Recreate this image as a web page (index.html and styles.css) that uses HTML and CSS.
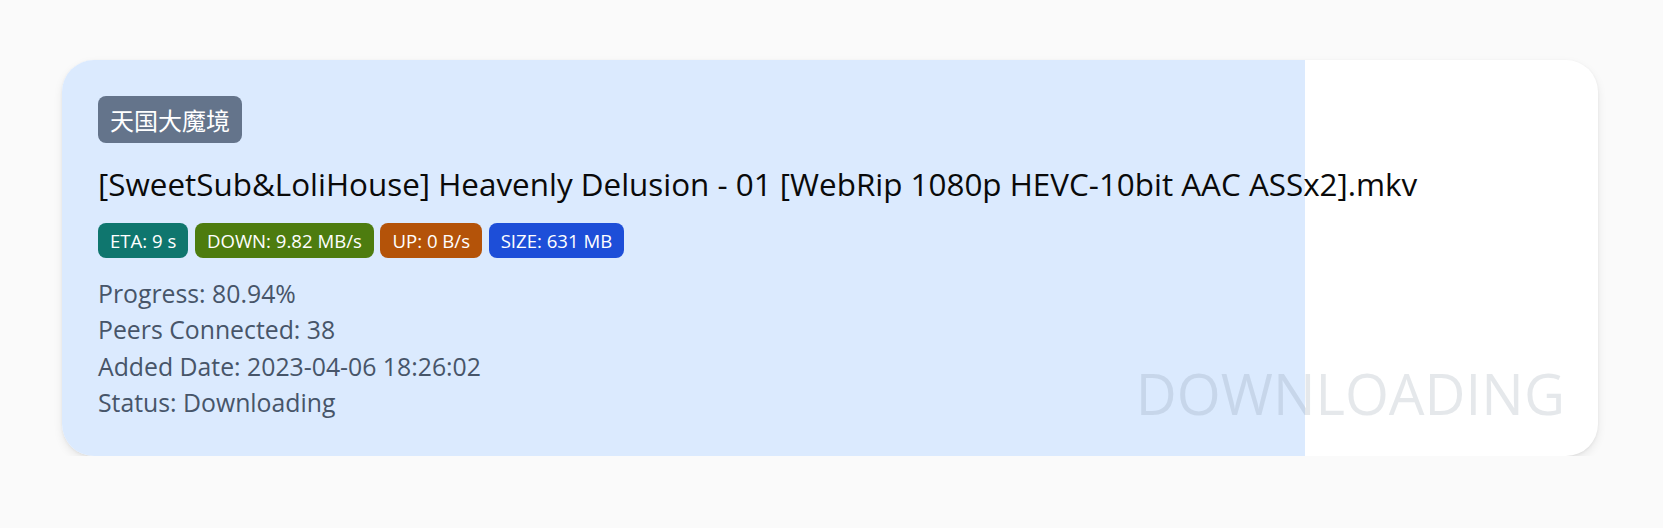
FILE: index.html
```html
<!DOCTYPE html>
<html lang="en">
<head>
<meta charset="utf-8">
<title>Torrent</title>
<link rel="stylesheet" href="styles.css">
</head>
<body>
<main class="page">
  <article class="card">
    <div class="fill" style="width: 80.94%"></div>
    <span class="watermark">DOWNLOADING</span>
    <div class="content">
      <span class="tag">天国大魔境</span>
      <h2 class="title">[SweetSub&amp;LoliHouse] Heavenly Delusion - 01 [WebRip 1080p HEVC-10bit AAC ASSx2].mkv</h2>
      <div class="badges">
        <span class="badge teal">ETA: 9 s</span>
        <span class="badge lime">DOWN: 9.82 MB/s</span>
        <span class="badge amber">UP: 0 B/s</span>
        <span class="badge blue">SIZE: 631 MB</span>
      </div>
      <div class="details">
        <p>Progress: 80.94%</p>
        <p>Peers Connected: 38</p>
        <p>Added Date: 2023-04-06 18:26:02</p>
        <p>Status: Downloading</p>
      </div>
    </div>
  </article>
</main>
</body>
</html>
```
FILE: styles.css
```css
* { box-sizing: border-box; }
body {
  margin: 0;
  background: #fafafa;
  font-family: "Open Sans", "Noto Sans CJK SC", sans-serif;
}
.page {
  padding: 60px 65px 0 62px;
}
.card {
  position: relative;
  overflow: hidden;
  background: #ffffff;
  border-radius: 32px;
  box-shadow: 0 4px 10px rgba(0, 0, 0, 0.08), 0 1px 3px rgba(0, 0, 0, 0.06);
  height: 396px;
}
.fill {
  position: absolute;
  left: 0; top: 0; bottom: 0;
  background: #dbeafe;
}
.watermark {
  position: absolute;
  right: 33px;
  bottom: 34px;
  font-size: 56.5px;
  line-height: 56px;
  color: rgba(100, 116, 139, 0.17);
  white-space: nowrap;
}
.content {
  position: relative;
  padding: 36px 36px 0 36px;
  display: flex;
  flex-direction: column;
  align-items: flex-start;
}
.tag {
  background: #64748b;
  color: #fff;
  font-family: "Noto Sans CJK SC", sans-serif;
  font-size: 24px;
  line-height: 33px;
  padding: 7px 12px;
  border-radius: 8px;
}
.title {
  margin: 21px 0 0;
  font-size: 31.4px;
  line-height: 40px;
  font-weight: 400;
  color: #0a0a0a;
  white-space: nowrap;
}
.badges {
  margin-top: 18.5px;
  display: flex;
  gap: 6.6px;
}
.badge {
  color: #fff;
  font-size: 18.6px;
  line-height: 25px;
  padding: 5px 12px;
  border-radius: 8px;
}
.teal { background: #0f766e; }
.lime { background: #4d7c0f; }
.amber { background: #b45309; }
.blue { background: #1d4ed8; }
.details {
  margin-top: 17.7px;
  color: #475569;
  font-size: 24.8px;
  line-height: 36.3px;
}
.details p { margin: 0; }
```
